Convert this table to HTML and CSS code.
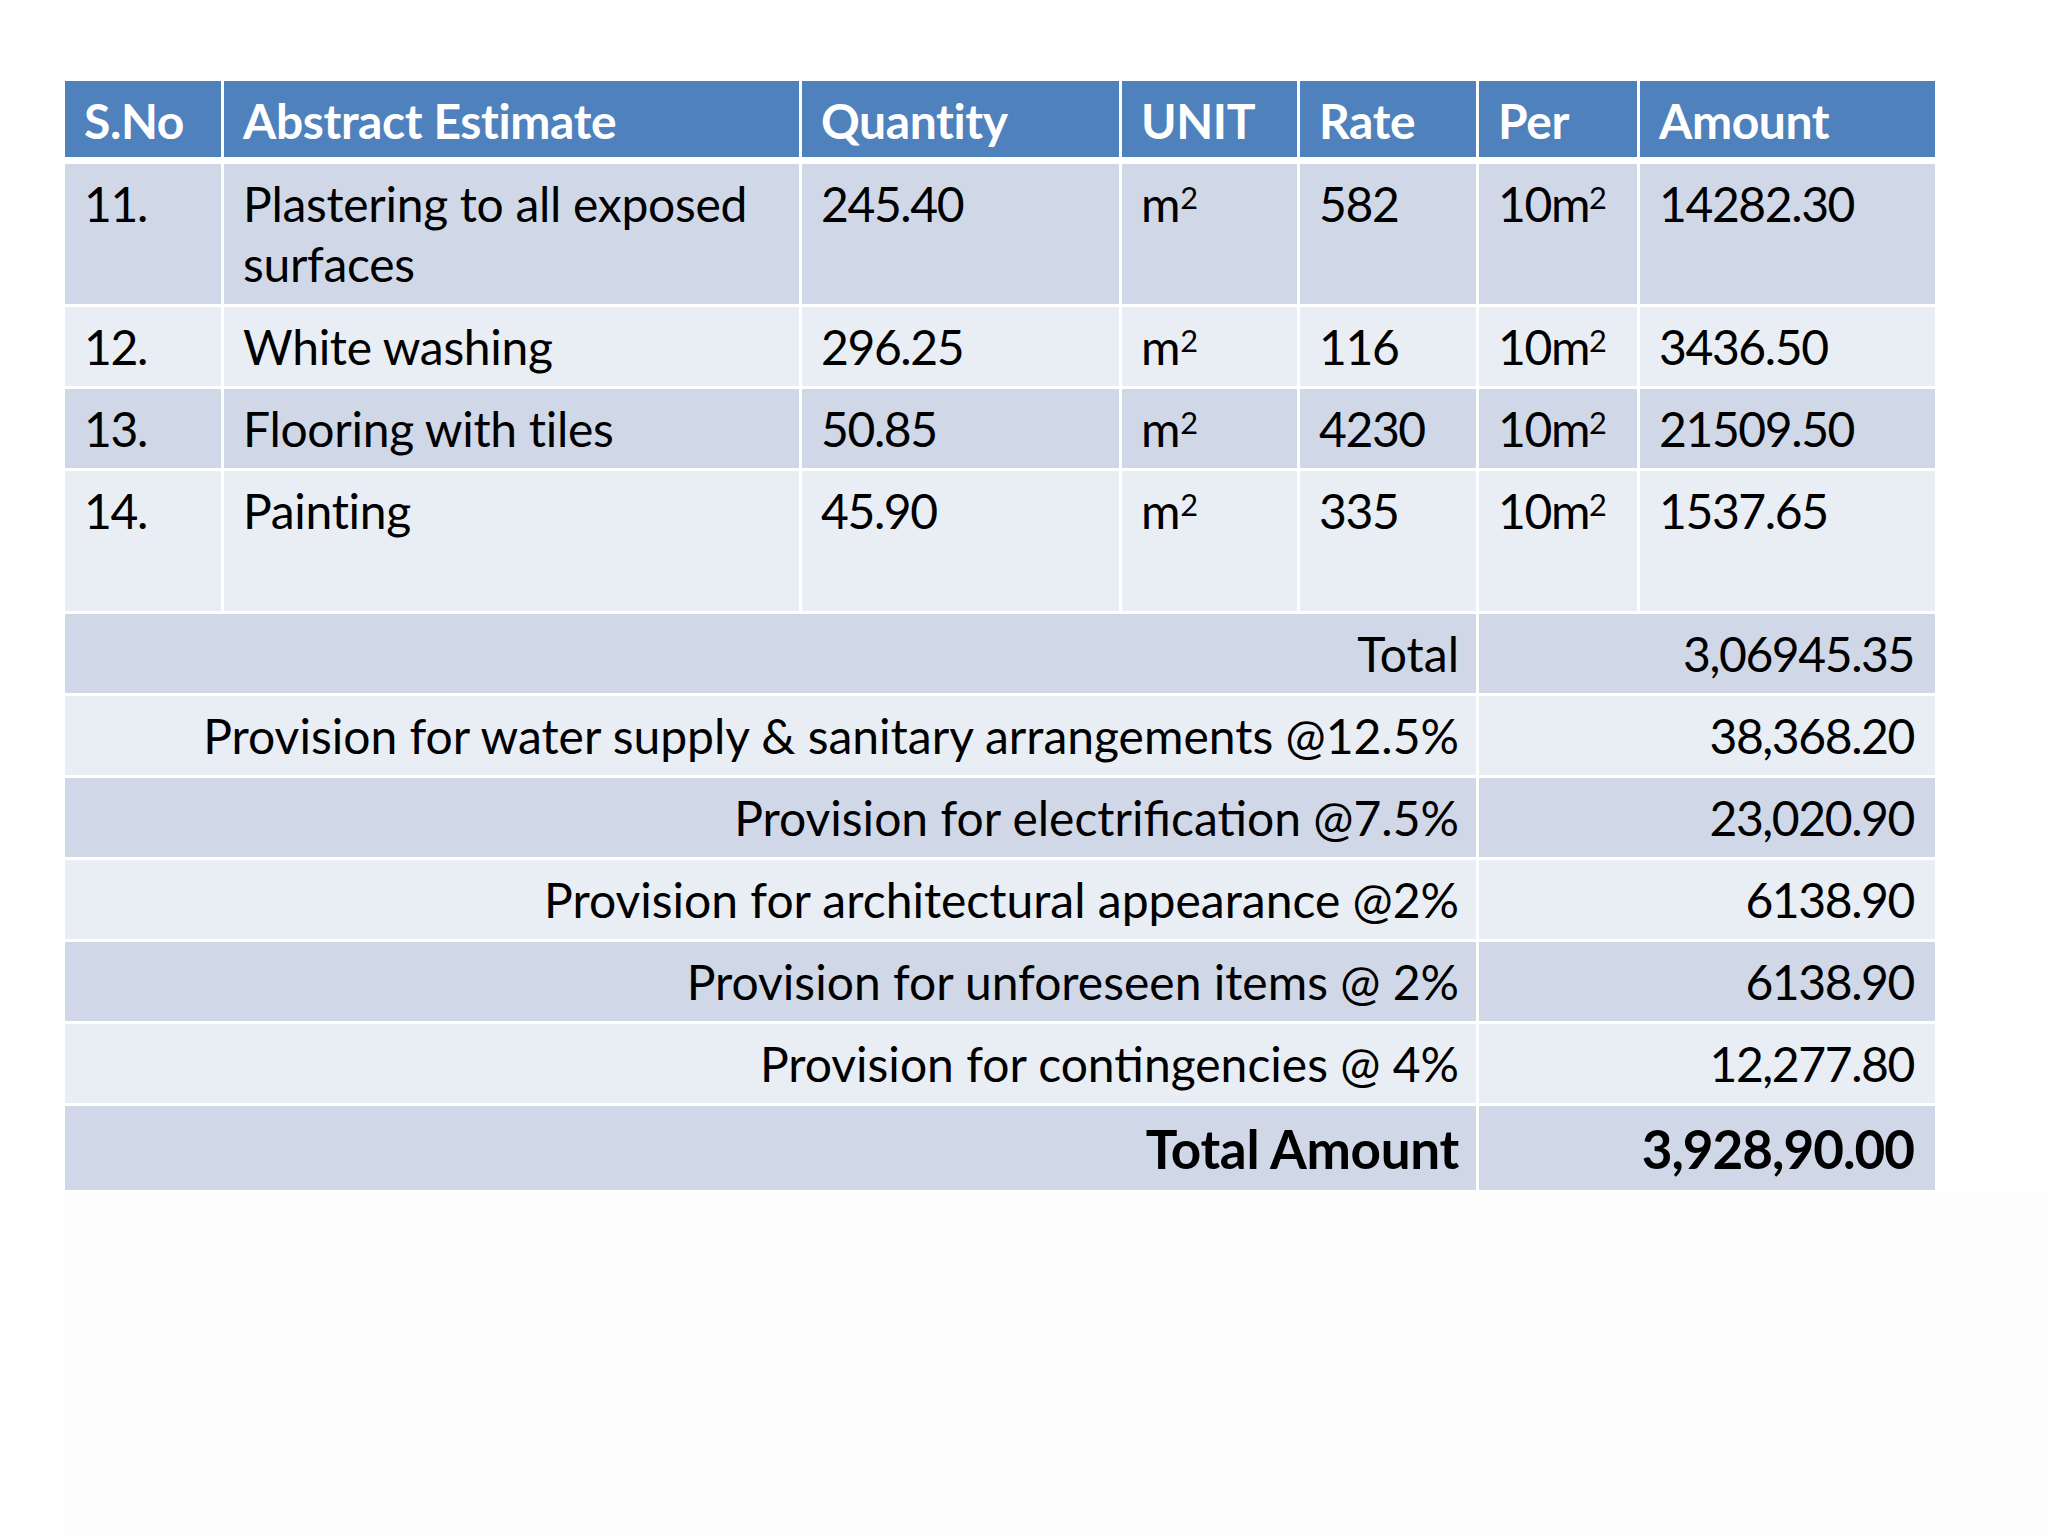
FILE: index.html
```html
<!DOCTYPE html>
<html lang="en">
<head>
<meta charset="utf-8">
<title>Abstract Estimate</title>
<link rel="stylesheet" href="styles.css">
</head>
<body>
<main class="slide">
  <table class="estimate">
    <colgroup>
      <col class="c-sno"><col class="c-desc"><col class="c-qty"><col class="c-unit"><col class="c-rate"><col class="c-per"><col class="c-amt">
    </colgroup>
    <thead>
      <tr class="r-head">
        <th>S.No</th><th>Abstract Estimate</th><th>Quantity</th><th>UNIT</th><th>Rate</th><th>Per</th><th>Amount</th>
      </tr>
    </thead>
    <tbody>
      <tr class="r-tall dark">
        <td class="n">11.</td><td>Plastering to all exposed surfaces</td><td class="n">245.40</td><td>m<sup>2</sup></td><td class="n">582</td><td class="n">10m<sup>2</sup></td><td class="n">14282.30</td>
      </tr>
      <tr class="r-std light">
        <td class="n">12.</td><td>White washing</td><td class="n">296.25</td><td>m<sup>2</sup></td><td class="n">116</td><td class="n">10m<sup>2</sup></td><td class="n">3436.50</td>
      </tr>
      <tr class="r-std dark">
        <td class="n">13.</td><td>Flooring with tiles</td><td class="n">50.85</td><td>m<sup>2</sup></td><td class="n">4230</td><td class="n">10m<sup>2</sup></td><td class="n">21509.50</td>
      </tr>
      <tr class="r-tall light">
        <td class="n">14.</td><td>Painting</td><td class="n">45.90</td><td>m<sup>2</sup></td><td class="n">335</td><td class="n">10m<sup>2</sup></td><td class="n">1537.65</td>
      </tr>
      <tr class="r-sum dark">
        <td colspan="5" class="label">Total</td><td colspan="2" class="value n">3,06945.35</td>
      </tr>
      <tr class="r-sum light">
        <td colspan="5" class="label">Provision for water supply &amp; sanitary arrangements @12.5%</td><td colspan="2" class="value n">38,368.20</td>
      </tr>
      <tr class="r-sum dark">
        <td colspan="5" class="label">Provision for electrification @7.5%</td><td colspan="2" class="value n">23,020.90</td>
      </tr>
      <tr class="r-sum light">
        <td colspan="5" class="label">Provision for architectural appearance @2%</td><td colspan="2" class="value n">6138.90</td>
      </tr>
      <tr class="r-sum dark">
        <td colspan="5" class="label">Provision for unforeseen items @ 2%</td><td colspan="2" class="value n">6138.90</td>
      </tr>
      <tr class="r-sum light">
        <td colspan="5" class="label">Provision for contingencies @ 4%</td><td colspan="2" class="value n">12,277.80</td>
      </tr>
      <tr class="r-final dark">
        <td colspan="5" class="label">Total Amount</td><td colspan="2" class="value n">3,928,90.00</td>
      </tr>
    </tbody>
  </table>
  <div class="below"></div>
</main>
</body>
</html>
```

FILE: styles.css
```css
html, body {
  margin: 0;
  padding: 0;
  background: #ffffff;
}

body {
  font-family: "Lato", "Open Sans", sans-serif;
  color: #000000;
}

.slide {
  width: 2048px;
  height: 1536px;
  padding: 78px 0 0 62px;
  box-sizing: border-box;
  display: flex;
  flex-direction: column;
  overflow: hidden;
}

.estimate {
  border-collapse: separate;
  border-spacing: 3px;
  table-layout: fixed;
  width: 1876px;
}

.c-sno { width: 156px; }
.c-desc { width: 575px; }
.c-qty { width: 317px; }
.c-unit { width: 175px; }
.c-rate { width: 176px; }
.c-per { width: 158px; }
.c-amt { width: 295px; }

.estimate th,
.estimate td {
  font-size: 48px;
  line-height: 60px;
  letter-spacing: -0.3px;
  padding: 10px 20px 0 19px;
  vertical-align: top;
  text-align: left;
  white-space: normal;
}

.estimate th {
  background: #4f81bd;
  color: #ffffff;
  font-weight: 700;
  letter-spacing: -0.4px;
  border-bottom: 4px solid #ffffff;
}

.estimate td.n {
  letter-spacing: -1.4px;
}

.r-head { height: 80px; }
.r-tall { height: 140px; }
.r-std { height: 79px; }
.r-sum { height: 79px; }
.r-final { height: 84px; }

.dark td { background: #d0d8e8; }
.light td { background: #e9edf4; }

.estimate td.label {
  text-align: right;
  letter-spacing: 0;
  padding-right: 17px;
}

.estimate td.value {
  text-align: right;
  padding-right: 21px;
}

.r-final td {
  font-size: 53px;
  line-height: 66px;
  font-weight: 700;
  padding-top: 10px;
}

.estimate .r-final td.label {
  letter-spacing: -0.3px;
}

.estimate .r-final td.n {
  letter-spacing: -1px;
}

.estimate sup {
  font-size: 0.64em;
  line-height: 0;
  letter-spacing: 0;
  vertical-align: 13px;
}

.below {
  flex: 1;
  margin: 0 0 0 3px;
  background: #fdfdfd;
}
```
